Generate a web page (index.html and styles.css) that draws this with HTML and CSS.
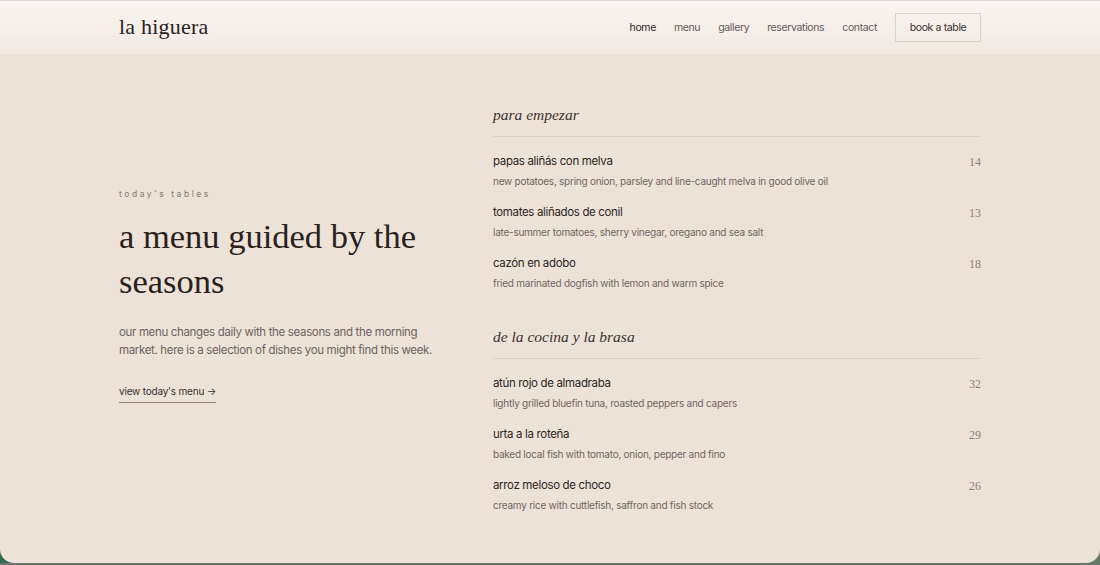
FILE: index.html
```html
<!DOCTYPE html>
<html lang="en">
<head>
    <meta charset="UTF-8">
    <meta name="viewport" content="width=device-width, initial-scale=1.0">
    <title>la higuera</title>
    <link rel="stylesheet" href="styles.css">
</head>
<body>

    <div class="window">

        <header class="site-header">
            <a class="logo" href="#">la higuera</a>
            <nav class="nav">
                <a href="#" class="active">home</a>
                <a href="#">menu</a>
                <a href="#">gallery</a>
                <a href="#">reservations</a>
                <a href="#">contact</a>
                <a href="#" class="book-btn">book a table</a>
            </nav>
        </header>

        <main class="content">

            <!-- Intro column -->
            <section class="intro">
                <p class="eyebrow">today's tables</p>
                <h1>a menu guided by the seasons</h1>
                <p class="lead">our menu changes daily with the seasons and the morning market. here is a selection of dishes you might find this week.</p>
                <a href="#" class="text-link">view today's menu &rarr;</a>
            </section>

            <!-- Menu column -->
            <section class="menu">
                <div class="menu-section">
                    <h2>para empezar</h2>
                    <ul class="dishes">
                        <li class="dish">
                            <div>
                                <h3>papas aliñás con melva</h3>
                                <p>new potatoes, spring onion, parsley and line-caught melva in good olive oil</p>
                            </div>
                            <span class="price">14</span>
                        </li>
                        <li class="dish">
                            <div>
                                <h3>tomates aliñados de conil</h3>
                                <p>late-summer tomatoes, sherry vinegar, oregano and sea salt</p>
                            </div>
                            <span class="price">13</span>
                        </li>
                        <li class="dish">
                            <div>
                                <h3>cazón en adobo</h3>
                                <p>fried marinated dogfish with lemon and warm spice</p>
                            </div>
                            <span class="price">18</span>
                        </li>
                    </ul>
                </div>

                <div class="menu-section">
                    <h2>de la cocina y la brasa</h2>
                    <ul class="dishes">
                        <li class="dish">
                            <div>
                                <h3>atún rojo de almadraba</h3>
                                <p>lightly grilled bluefin tuna, roasted peppers and capers</p>
                            </div>
                            <span class="price">32</span>
                        </li>
                        <li class="dish">
                            <div>
                                <h3>urta a la roteña</h3>
                                <p>baked local fish with tomato, onion, pepper and fino</p>
                            </div>
                            <span class="price">29</span>
                        </li>
                        <li class="dish">
                            <div>
                                <h3>arroz meloso de choco</h3>
                                <p>creamy rice with cuttlefish, saffron and fish stock</p>
                            </div>
                            <span class="price">26</span>
                        </li>
                    </ul>
                </div>
            </section>

        </main>
    </div>

</body>
</html>
```

FILE: styles.css
```css
/* Desktop behind the browser window */
body {
    margin: 0;
    height: 565px;
    overflow: hidden;
    background: linear-gradient(90deg, #2d6a4f 0%, #48705a 50%, #5f7d60 100%);
    font-family: Inter, "Noto Sans", sans-serif;
    border-bottom: 2px solid #6d736f;
    box-sizing: border-box;
}

/* Page inside the window */
.window {
    height: 563px;
    background-color: #ece2d8;
    border-top: 1px solid #dedad7;
    border-radius: 0 0 14px 14px;
    overflow: hidden;
    box-sizing: border-box;
    display: flex;
    flex-direction: column;
}

a {
    text-decoration: none;
    color: inherit;
}

/* Header */
.site-header {
    height: 53px;
    padding: 0 119px;
    display: flex;
    align-items: center;
    justify-content: space-between;
    background: linear-gradient(180deg, #f9f4f1 0%, #f1e9e2 100%);
    border-bottom: 1px solid #ebe2da;
    flex-shrink: 0;
}

.logo {
    font-family: "Liberation Serif", serif;
    font-size: 22px;
    color: #2b231f;
    letter-spacing: 0.01em;
    margin-top: -1px;
}

.nav {
    display: flex;
    align-items: center;
    gap: 18px;
    font-size: 10.5px;
    letter-spacing: -0.035em;
    color: #655b55;
}

.nav a.active {
    color: #2e2622;
}

.book-btn {
    height: 29px;
    width: 86px;
    box-sizing: border-box;
    border: 1px solid #dcd2c9;
    display: flex;
    align-items: center;
    justify-content: center;
    color: #3a312c;
}

/* Main two-column layout */
.content {
    flex: 1;
    display: grid;
    grid-template-columns: 330px 488px;
    justify-content: space-between;
    align-items: center;
    padding: 0 119px 2px;
}

.intro {
    padding-bottom: 27px;
}

.eyebrow {
    margin: 0;
    font-size: 8.5px;
    line-height: 14px;
    letter-spacing: 0.3em;
    color: #867b73;
}

.intro h1 {
    margin: 13px 0 0;
    font-family: "Liberation Serif", serif;
    font-weight: normal;
    font-size: 34.5px;
    line-height: 45px;
    color: #2a211c;
}

.lead {
    margin: 19px 0 0;
    font-size: 11.5px;
    line-height: 18px;
    letter-spacing: -0.03em;
    color: #6e645d;
}

.text-link {
    display: inline-block;
    margin-top: 24px;
    font-size: 10px;
    line-height: 16px;
    letter-spacing: -0.02em;
    color: #3a302a;
    padding-bottom: 3px;
    border-bottom: 1px solid #8c8078;
}

/* Menu column */
.menu {
    padding-bottom: 2px;
}

.menu-section + .menu-section {
    margin-top: 33px;
}

.menu-section h2 {
    margin: 0;
    font-family: "Liberation Serif", serif;
    font-style: italic;
    font-weight: normal;
    font-size: 15.5px;
    line-height: 26px;
    color: #3d332d;
    padding-bottom: 8px;
    border-bottom: 1px solid #dcd2c8;
}

.dishes {
    list-style: none;
    margin: 15px 0 0;
    padding: 0;
}

.dish {
    display: flex;
    justify-content: space-between;
    align-items: flex-start;
}

.dish + .dish {
    margin-top: 14px;
}

.dish h3 {
    margin: 0;
    font-weight: normal;
    font-size: 11.5px;
    line-height: 18px;
    letter-spacing: -0.03em;
    color: #2e2622;
}

.dish p {
    margin: 3px 0 0;
    font-size: 10px;
    line-height: 16px;
    letter-spacing: -0.025em;
    color: #72675f;
}

.price {
    font-family: "Liberation Serif", serif;
    font-size: 12px;
    line-height: 18px;
    color: #8d827a;
    padding-top: 1px;
}
```
